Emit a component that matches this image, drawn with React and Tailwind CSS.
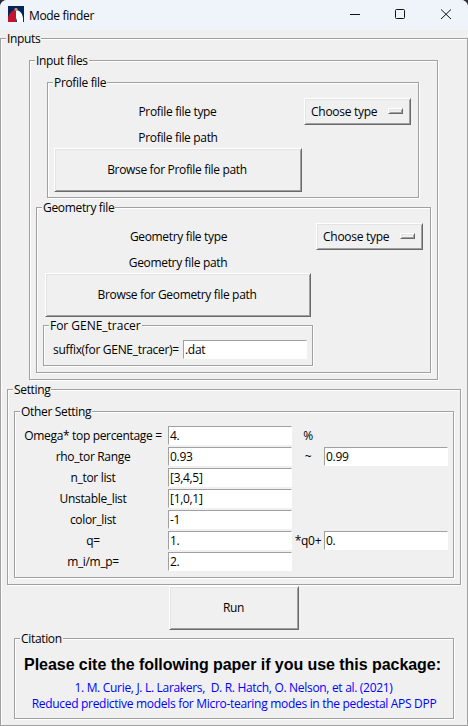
import React from "react";

const groove = "border border-[#a0a0a0] shadow-[1px_1px_0_#fff,inset_1px_1px_0_#fff]";
const raised =
  "border border-t-white border-l-white border-r-[#696969] border-b-[#696969] shadow-[inset_1px_1px_0_#e3e3e3,inset_-1px_-1px_0_#a0a0a0]";

function Group({ title, className = "", titleClass = "", children }) {
  return (
    <section className={`flex shrink-0 flex-col items-start ${groove} ${className}`}>
      <h2 className={`-mt-[8px] ml-[5px] h-4 shrink-0 bg-[#f0f0f0] px-px leading-4 ${titleClass}`}>{title}</h2>
      {children}
    </section>
  );
}

function Button({ className = "", children }) {
  return (
    <button className={`flex h-11 shrink-0 items-center justify-center bg-[#f0f0f0] ${raised} ${className}`}>
      {children}
    </button>
  );
}

function Choose() {
  return (
    <button className={`flex h-[27px] w-[107px] shrink-0 items-center justify-between pr-[7px] pl-1.5 ${raised}`}>
      <span className="tracking-[-0.27px]">Choose type</span>
      <span className={`-mt-px h-[6px] w-[15px] ${raised}`} />
    </button>
  );
}

function Entry({ value }) {
  return (
    <input
      defaultValue={value}
      className="block h-[19px] w-[124px] shrink-0 border border-t-[#a0a0a0] border-r-white border-b-white border-l-[#a0a0a0] bg-white pl-px leading-4 tracking-[-0.3px] outline-none"
    />
  );
}

function Label({ className = "", children }) {
  return <div className={`flex h-5 shrink-0 items-center justify-center ${className}`}>{children}</div>;
}

const rows = [
  ["Omega* top percentage =", "4.", "%"],
  ["rho_tor Range", "0.93", "~", "0.99"],
  ["n_tor list", "[3,4,5]"],
  ["Unstable_list", "[1,0,1]"],
  ["color_list", "-1"],
  ["q=", "1.", "*q0+", "0."],
  ["m_i/m_p=", "2."],
];

export default function App() {
  return (
    <div className="h-[726px] w-[468px] overflow-hidden bg-[#2c3036] font-['Open_Sans','Noto_Sans',sans-serif] text-[12px] tracking-[-0.33px] whitespace-pre text-black">
      <div className="flex h-full flex-col overflow-hidden rounded-t-[7px] bg-[#f0f0f0]">
        <header className="flex h-[30px] shrink-0 items-center bg-[#eff3fa] pl-2">
          <svg width="16" height="16" viewBox="0 0 16 16" className="-mt-0.5">
            <path fill="#06245c" d="M0 0h16v16H0z" />
            <path fill="#c4122f" d="M0 16v-4C1 7.500 4 4 8 4v12z" />
            <path fill="#fff" d="M8 4c4 .5 6.500 3.500 7 8v4H9l-.5-3-.5-1z" />
            <path fill="#c98b62" d="M6 4 7 2h2l1 2-2 1z" />
          </svg>
          <h1 className="mt-px ml-[5px] grow tracking-[-0.33px]">Mode finder</h1>
          <svg width="118" height="30" viewBox="0 0 118 30" fill="none" stroke="#111" className="shrink-0">
            <path d="M0 14.500h10" />
            <rect x="45.500" y="9.500" width="9" height="9" rx="1" />
            <path d="m91 9.500 10 9.500m0-9.500-10 9.500" />
          </svg>
        </header>

        <Group title="Inputs" className="mt-2 h-[688px] w-[468px]">
          <Group title="Input files" className="mt-[13px] ml-[28px] h-[320px] w-[409px]">
            <Group title="Profile file" className="mt-[13px] ml-[17px] h-[116px] w-[372px]">
              <div className="mt-[7px] flex h-[27px] items-center">
                <Label className="mr-[2px] ml-[6px] w-[248px] pr-px">Profile file type</Label>
                <Choose />
              </div>
              <Label className="mt-[3px] ml-[6px] w-[248px]">Profile file path</Label>
              <Button className="ml-[6px] w-[248px] pr-[2px]">Browse for Profile file path</Button>
            </Group>
            <Group title="Geometry file" className="mt-[9px] ml-[6px] h-[166px] w-[395px]">
              <div className="mt-[7px] flex h-[27px] items-center">
                <Label className="mr-[5px] ml-[8px] w-[266px] pl-px">Geometry file type</Label>
                <Choose />
              </div>
              <Label className="mt-[3px] ml-[8px] w-[266px]">Geometry file path</Label>
              <Button className="ml-[8px] w-[266px] pr-[2px]">Browse for Geometry file path</Button>
              <Group
                title="For GENE_tracer"
                titleClass="tracking-[-0.02px]"
                className="mt-[8px] ml-[6px] h-[41px] w-[270px]"
              >
                <div className="mt-[6px] ml-[9px] flex items-start">
                  <Label className="w-[130px] !justify-start tracking-[-0.31px]">suffix(for GENE_tracer)=</Label>
                  <Entry value=".dat" />
                </div>
              </Group>
            </Group>
          </Group>

          <Group title="Setting" className="mt-[9px] ml-[6px] h-[196px] w-[454px]">
            <Group title="Other Setting" className="mt-[13px] ml-[6px] h-[167px] w-[440px]">
              <div className="mt-[5px] ml-[4px] flex flex-col">
                {rows.map(([label, value, unit, second]) => (
                  <div key={label} className="flex h-[21px] items-center">
                    <Label className="mr-[2px] w-[147px] pl-px">{label}</Label>
                    <Entry value={value} />
                    <Label className="w-[32px]">{unit}</Label>
                    {second && <Entry value={second} />}
                  </div>
                ))}
              </div>
            </Group>
          </Group>

          <Button className="mt-px ml-[168px] w-[130px] pr-px">Run</Button>

          <Group title="Citation" className="mt-[8px] ml-[13px] h-[81px] w-[440px]">
            <div className="mt-[8px] flex w-full flex-col items-center pr-[3px] text-[#0000ff]">
              <p className="font-['Liberation_Sans',Arial,sans-serif] text-[16px] leading-[20px] font-bold tracking-[-0.05px] text-black">
                Please cite the following paper if you use this package:
              </p>
              <p className="mt-[5px] pl-[2px] leading-[16px] tracking-[-0.31px]">1. M. Curie, J. L. Larakers,  D. R. Hatch, O. Nelson, et al. (2021)</p>
              <p className="pl-[3px] leading-[16px] tracking-[-0.3px]">Reduced predictive models for Micro-tearing modes in the pedestal APS DPP</p>
            </div>
          </Group>
        </Group>
      </div>
    </div>
  );
}
